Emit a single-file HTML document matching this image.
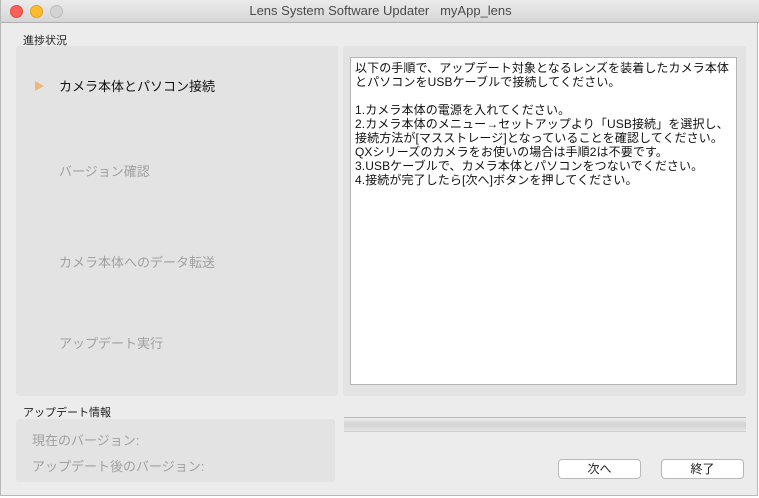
<!DOCTYPE html>
<html><head><meta charset="utf-8"><style>
body{margin:0;width:759px;height:498px;background:#fff;overflow:hidden;font-family:"Liberation Sans","Noto Sans CJK JP",sans-serif;}
.win{position:absolute;left:0;top:0;width:758px;height:496px;background:#ececec;border:1px solid #b8b8b8;border-top:none;box-sizing:border-box;}
.title{position:absolute;left:0;top:0;width:759px;height:22px;background:linear-gradient(#ebebeb,#d6d6d6);border-bottom:1px solid #b0b0b0;text-align:center;font-size:13px;line-height:22px;color:#4a4a4a;}
.dot{position:absolute;top:5px;width:12px;height:12px;border-radius:50%;}
.abs{position:absolute;}
.panel{position:absolute;background:#e3e3e3;border-radius:3px;}
.lbl{font-size:11px;color:#222;}
.step{position:absolute;left:58px;font-size:13px;color:#a0a0a0;}
.txt{position:absolute;left:349px;top:57px;width:387px;height:328px;background:#fff;border:1px solid #b5b5b5;box-sizing:border-box;padding:3px 0 0 4px;font-size:12px;line-height:14px;color:#111;white-space:pre;letter-spacing:0.1px;}
.btn{position:absolute;top:459px;width:83px;height:20px;background:#fff;border:1px solid #b8b8b8;border-radius:4px;box-sizing:border-box;text-align:center;font-size:12px;line-height:18px;color:#222;}
</style></head><body>
<div class="win">
<div class="title">Lens System Software Updater&nbsp;&nbsp;&nbsp;myApp_lens
<div class="dot" style="left:9px;background:#fc5f57;border:1px solid #de4a42;width:11px;height:11px"></div>
<div class="dot" style="left:29px;background:#fdbc2e;border:1px solid #dea123;width:11px;height:11px"></div>
<div class="dot" style="left:49px;background:#d3d3d3;border:1px solid #bcbcbc;width:11px;height:11px"></div>
</div>
<div class="abs lbl" style="left:22px;top:32px">進捗状況</div>
<div class="panel" style="left:15px;top:46px;width:322px;height:350px"></div>
<div class="abs" style="left:34px;top:81px;width:0;height:0;border-left:9px solid #f0b87a;border-top:5px solid transparent;border-bottom:5px solid transparent"></div>
<div class="step" style="top:76px;color:#111">カメラ本体とパソコン接続</div>
<div class="step" style="top:161px">バージョン確認</div>
<div class="step" style="top:252px">カメラ本体へのデータ転送</div>
<div class="step" style="top:333px">アップデート実行</div>
<div class="panel" style="left:342px;top:46px;width:403px;height:350px"></div>
<div class="txt">以下の手順で、アップデート対象となるレンズを装着したカメラ本体
とパソコンをUSBケーブルで接続してください。

1.カメラ本体の電源を入れてください。
2.カメラ本体のメニュー→セットアップより「USB接続」を選択し、
接続方法が[マスストレージ]となっていることを確認してください。
QXシリーズのカメラをお使いの場合は手順2は不要です。
3.USBケーブルで、カメラ本体とパソコンをつないでください。
4.接続が完了したら[次へ]ボタンを押してください。</div>
<div class="abs lbl" style="left:22px;top:404px">アップデート情報</div>
<div class="panel" style="left:15px;top:419px;width:319px;height:63px"></div>
<div class="abs" style="left:31px;top:430px;font-size:13px;color:#a0a0a0">現在のバージョン:</div>
<div class="abs" style="left:31px;top:456px;font-size:13px;color:#a0a0a0">アップデート後のバージョン:</div>
<div class="abs" style="left:343px;top:417px;width:402px;height:15px;border-top:1px solid #b8b8b8;border-bottom:1px solid #d0d0d0;background:linear-gradient(#eee,#d2d2d2 50%,#e6e6e6);box-sizing:border-box"></div>
<div class="btn" style="left:557px">次へ</div>
<div class="btn" style="left:660px">終了</div>
</div>
</body></html>
